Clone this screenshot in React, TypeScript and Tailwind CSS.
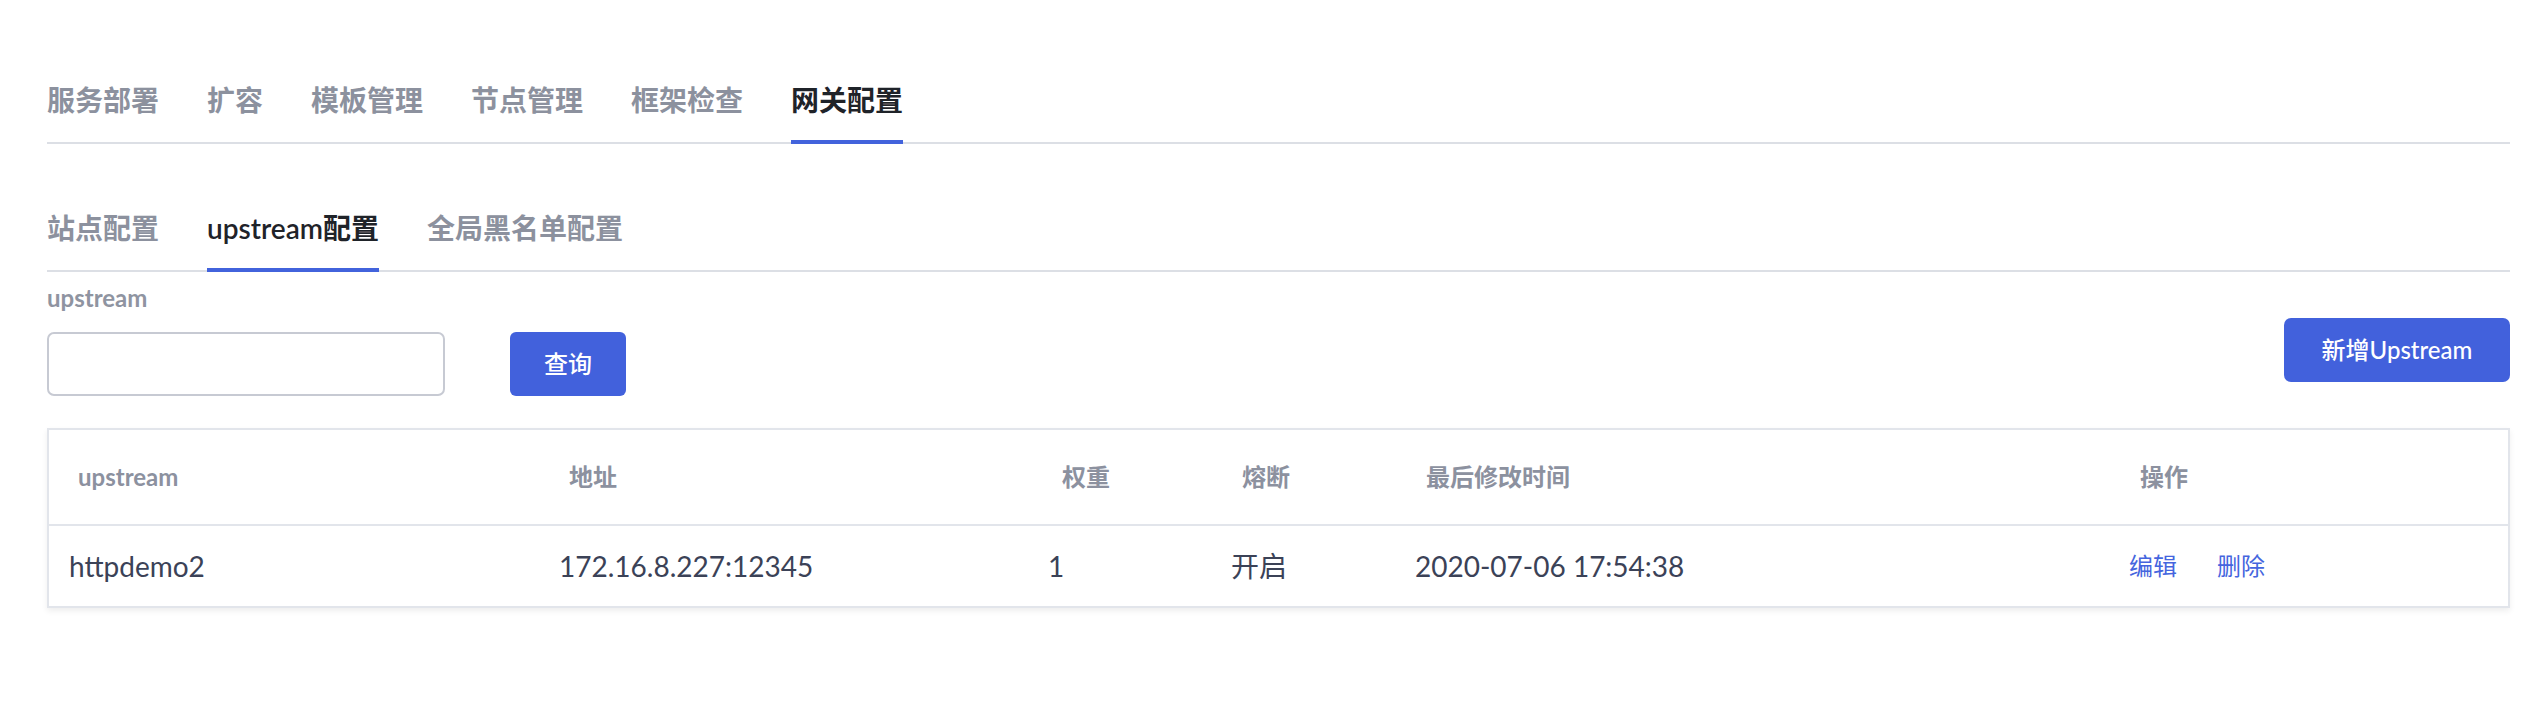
import React from "react";

const topTabs = ["服务部署", "扩容", "模板管理", "节点管理", "框架检查", "网关配置"];
const subTabs = ["站点配置", "upstream配置", "全局黑名单配置"];

const cols = "grid grid-cols-[491px_492px_181px_182px_714px_1fr]";

export default function App() {
  return (
    <div className="min-h-[720px] w-[2544px] bg-white pl-[47px] pr-[34px] pt-[80px] font-['Lato','Noto_Sans_CJK_SC',sans-serif]">
      {/* top tabs */}
      <div className="flex gap-[48px] border-b-2 border-[#dcdfe5]">
        {topTabs.map((t, i) => {
          const active = i === topTabs.length - 1;
          return (
            <div
              key={t}
              className={
                "-mb-[2px] text-[28px] leading-[40px] font-semibold pb-[20px] border-b-4 " +
                (active ? "border-[#4263dc] text-[#1f2329]" : "border-transparent text-[#8c919e]")
              }
            >
              {t}
            </div>
          );
        })}
      </div>

      {/* sub tabs */}
      <div className="mt-[64px] flex gap-[48px] border-b-2 border-[#dcdfe5]">
        {subTabs.map((t, i) => {
          const active = i === 1;
          return (
            <div
              key={t}
              className={
                "-mb-[2px] text-[28px] leading-[40px] font-semibold pb-[20px] border-b-4 " +
                (active ? "border-[#4263dc] text-[#1f2329]" : "border-transparent text-[#8c919e]")
              }
            >
              {t}
            </div>
          );
        })}
      </div>

      {/* filter */}
      <div className="mt-[10px] flex items-start justify-between">
        <div className="flex flex-col">
          <div className="text-[24px] leading-[32px] font-bold text-[#8f94a1]">upstream</div>
          <div className="mt-[18px] flex items-center gap-[65px]">
            <input
              className="h-[64px] w-[398px] rounded-[7px] border-2 border-[#c7cad3] bg-white px-3 text-[24px] outline-none"
              type="text"
            />
            <button className="h-[64px] w-[116px] rounded-[6px] bg-[#4261dc] text-[24px] font-medium text-white">
              查询
            </button>
          </div>
        </div>
        <button className="mt-[36px] h-[64px] w-[226px] rounded-[7px] bg-[#4261dc] text-[24px] font-medium text-white">
          新增Upstream
        </button>
      </div>

      {/* table */}
      <div className="mt-[32px] border-2 border-[#e2e5eb] bg-white shadow-[0_3px_6px_rgba(0,0,0,0.07)]">
        <div className={cols + " h-[96px] items-center border-b-2 border-[#e2e5eb] text-[24px] font-bold text-[#8c919f]"}>
          <div className="pl-[29px]">upstream</div>
          <div className="pl-[29px]">地址</div>
          <div className="pl-[30px]">权重</div>
          <div className="pl-[29px]">熔断</div>
          <div className="pl-[31px]">最后修改时间</div>
          <div className="pl-[31px]">操作</div>
        </div>
        <div className={cols + " h-[80px] items-center text-[28px] text-[#3b4257]"}>
          <div className="pl-[20px]">httpdemo2</div>
          <div className="pl-[19px]">172.16.8.227:12345</div>
          <div className="pl-[16px]">1</div>
          <div className="pl-[18px]">开启</div>
          <div className="pl-[20px]">2020-07-06 17:54:38</div>
          <div className="flex gap-[40px] pl-[20px] text-[24px] text-[#4565de]">
            <span>编辑</span>
            <span>删除</span>
          </div>
        </div>
      </div>
    </div>
  );
}
